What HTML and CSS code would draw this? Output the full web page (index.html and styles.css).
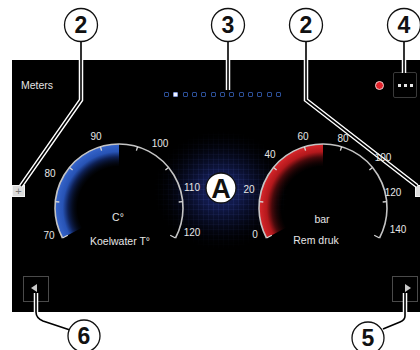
FILE: index.html
```html
<!DOCTYPE html>
<html lang="nl">
<head>
    <meta charset="UTF-8">
    <meta name="viewport" content="width=device-width, initial-scale=1.0">
    <title>Meters</title>
    <link rel="stylesheet" href="styles.css">
</head>
<body>
<div class="page">
    <div class="screen">
        <div class="topbar">
            <span class="title">Meters</span>
            <div class="pager">
                <i></i><i class="active"></i><i></i><i></i><i></i><i></i><i></i><i></i><i></i><i></i><i></i><i></i><i></i>
            </div>
            <span class="rec"></span>
            <button class="more"><i></i><i></i><i></i></button>
        </div>

        <div class="gauges">
            <span class="side-btn">+</span>

            <!-- coolant temperature -->
            <svg class="gauge" width="170" height="130" viewBox="0 0 170 130">
                <defs>
                    <radialGradient id="blueBand" gradientUnits="userSpaceOnUse" cx="85" cy="80" r="64">
                        <stop offset="0.62" stop-color="#000" stop-opacity="0"/>
                        <stop offset="0.8" stop-color="#0f2258"/>
                        <stop offset="0.88" stop-color="#2753b5"/>
                        <stop offset="1" stop-color="#3766cc"/>
                    </radialGradient>
                </defs>
                <path d="M28.5 110 A64 64 0 0 1 85 16 L85 38 A42 42 0 0 0 47.9 99.7 Z" fill="url(#blueBand)"/>
                <path class="rim" d="M28.5 110 A64 64 0 1 1 141.5 110"/>
                <path class="ticks" d="M28.5 110 L33.8 107.2 M21.3 73.6 L25.3 74 M35.5 39.4 L38.6 41.9 M66.4 18.8 L67.6 22.6 M103.6 18.8 L102.4 22.6 M134.5 39.4 L131.4 41.9 M148.7 73.6 L144.7 74 M141.5 110 L136.2 107.2"/>
                <text class="num" x="15" y="107">70</text>
                <text class="num" x="16" y="45">80</text>
                <text class="num" x="62" y="8">90</text>
                <text class="num" x="126" y="15">100</text>
                <text class="num" x="158" y="59">110</text>
                <text class="num" x="158" y="104">120</text>
                <text class="unit" x="84" y="89">C°</text>
                <text class="unit" x="86" y="113">Koelwater T°</text>
            </svg>

            <div class="glow"></div>

            <!-- brake pressure -->
            <svg class="gauge" width="170" height="130" viewBox="0 0 170 130">
                <defs>
                    <radialGradient id="redBand" gradientUnits="userSpaceOnUse" cx="85" cy="80" r="64">
                        <stop offset="0.62" stop-color="#000" stop-opacity="0"/>
                        <stop offset="0.8" stop-color="#4a0a0c"/>
                        <stop offset="0.88" stop-color="#b3181c"/>
                        <stop offset="1" stop-color="#d9272b"/>
                    </radialGradient>
                </defs>
                <path d="M28.5 110 A64 64 0 0 1 85 16 L85 38 A42 42 0 0 0 47.9 99.7 Z" fill="url(#redBand)"/>
                <path class="rim" d="M28.5 110 A64 64 0 1 1 141.5 110"/>
                <path class="ticks" d="M28.5 110 L33.8 107.2 M21.3 73.6 L25.3 74 M35.5 39.4 L38.6 41.9 M66.4 18.8 L67.6 22.6 M103.6 18.8 L102.4 22.6 M134.5 39.4 L131.4 41.9 M148.7 73.6 L144.7 74 M141.5 110 L136.2 107.2"/>
                <text class="num" x="17" y="106">0</text>
                <text class="num" x="11" y="61">20</text>
                <text class="num" x="32" y="26">40</text>
                <text class="num" x="65" y="8">60</text>
                <text class="num" x="105" y="10">80</text>
                <text class="num" x="145" y="29">100</text>
                <text class="num" x="155" y="64">120</text>
                <text class="num" x="160" y="101">140</text>
                <text class="unit" x="84" y="91">bar</text>
                <text class="unit" x="78" y="112">Rem druk</text>
            </svg>

            <span class="side-btn side-right"></span>
        </div>

        <div class="nav">
            <button class="nav-btn prev"></button>
            <button class="nav-btn next"></button>
        </div>
    </div>

    <!-- manual callouts -->
    <svg class="callouts" width="420" height="350" viewBox="0 0 420 350">
        <g class="halo">
            <path d="M81 42 V100 L21 186"/>
            <path d="M228 42 V90"/>
            <path d="M306 42 V100 L417 186"/>
            <path d="M404 42 V73"/>
            <path d="M36 293 V312 Q36 318 43 321 L70 330"/>
            <path d="M405 293 V316 Q405 320 400 322 L383 329"/>
        </g>
        <g class="leader">
            <path d="M81 42 V100 L21 186"/>
            <path d="M228 42 V90"/>
            <path d="M306 42 V100 L417 186"/>
            <path d="M404 42 V73"/>
            <path d="M36 292 V312 Q36 318 43 321 L70 330"/>
            <path d="M405 292 V316 Q405 320 400 322 L383 329"/>
        </g>
        <g class="bubble">
            <circle cx="81" cy="25" r="16.5"/><text x="81" y="33">2</text>
            <circle cx="228" cy="25" r="16.5"/><text x="228" y="33">3</text>
            <circle cx="306" cy="25" r="16.5"/><text x="306" y="33">2</text>
            <circle cx="404" cy="25" r="16.5"/><text x="404" y="33">4</text>
            <circle cx="84" cy="336" r="16"/><text x="84" y="344">6</text>
            <circle cx="368" cy="338" r="16"/><text x="368" y="346">5</text>
        </g>
        <g class="bubble bubble-a">
            <circle cx="221" cy="188" r="15"/><text x="221" y="198">A</text>
        </g>
    </svg>
</div>
</body>
</html>
```

FILE: styles.css
```css
body {
    margin: 0;
    background: #fff;
    font-family: "Liberation Sans", Arial, sans-serif;
}
.page {
    position: relative;
    width: 420px;
    height: 350px;
    overflow: hidden;
    padding-top: 60px;
    box-sizing: border-box;
}
.screen {
    margin-left: 12px;
    width: 408px;
    height: 252px;
    background: #000;
    overflow: hidden;
    display: flex;
    flex-direction: column;
}

/* top bar */
.topbar {
    height: 38px;
    box-sizing: border-box;
    padding: 12px 3px 0 9px;
    display: grid;
    grid-template-columns: 143px 1fr auto auto;
    align-items: center;
}
.title {
    color: #e4e4e4;
    font-size: 10.5px;
}
.pager {
    align-self: end;
    margin-bottom: 1px;
    display: flex;
    gap: 4.33px;
}
.pager i {
    width: 5px;
    height: 5px;
    box-sizing: border-box;
    border: 1px solid #2c4f96;
    border-radius: 1px;
}
.pager i.active {
    background: #f2f4ff;
    border-color: #7d95d6;
}
.rec {
    width: 9px;
    height: 9px;
    box-sizing: border-box;
    border-radius: 50%;
    background: #e3222a;
    border: 1.5px solid #f0cfd0;
    margin-right: 9px;
}
.more {
    width: 24px;
    height: 26px;
    padding: 0;
    background: #000;
    border: 1.5px solid #3a3a3a;
    border-radius: 2px;
    display: flex;
    align-items: center;
    justify-content: center;
    gap: 3px;
}
.more i {
    width: 3px;
    height: 3px;
    background: #e6e6e6;
}

/* gauges */
.gauges {
    display: flex;
    align-items: flex-start;
    padding-top: 30px;
}
.side-btn {
    flex: none;
    width: 13px;
    height: 12px;
    margin-top: 57px;
    box-sizing: border-box;
    background: #dcdcdc;
    border: 1px solid #f4f4f4;
    color: #7a7a7a;
    font-size: 11px;
    line-height: 10px;
    text-align: center;
}
.side-right {
    margin-left: 7px;
}
.gauge {
    flex: none;
    position: relative;
    z-index: 1;
    overflow: visible;
}
.gauges .side-btn + .gauge {
    margin-left: 9px;
}
.glow {
    flex: none;
    width: 136px;
    height: 120px;
    margin: 2px -51px 0;
    background:
        repeating-linear-gradient(0deg, rgba(80, 100, 200, 0.12) 0 1px, transparent 1px 5px),
        repeating-linear-gradient(90deg, rgba(80, 100, 200, 0.12) 0 1px, transparent 1px 5px),
        radial-gradient(closest-side, #172262, #0a1030 60%, #000);
    -webkit-mask-image: radial-gradient(closest-side, #000 30%, transparent);
    mask-image: radial-gradient(closest-side, #000 30%, transparent);
}
.rim {
    fill: none;
    stroke: #c4c4c4;
    stroke-width: 1.6;
}
.ticks {
    fill: none;
    stroke: #d6d6d6;
    stroke-width: 1.3;
}
.num,
.unit {
    fill: #e6e6e6;
    font-family: "Liberation Sans", Arial, sans-serif;
    font-size: 10px;
    text-anchor: middle;
    dominant-baseline: central;
}
.unit {
    font-size: 10.5px;
}

/* bottom navigation */
.nav {
    margin-top: auto;
    padding: 0 2px 10px 11px;
    display: flex;
    justify-content: space-between;
}
.nav-btn {
    width: 26px;
    height: 26px;
    padding: 0;
    background: #000;
    border: 1px solid #4a4a4a;
    display: flex;
    align-items: center;
    justify-content: center;
}
.nav-btn::before {
    content: "";
    border-top: 4.5px solid transparent;
    border-bottom: 4.5px solid transparent;
}
.prev::before {
    border-right: 6px solid #c9c9c9;
    margin-left: -5px;
    margin-top: -2px;
}
.next::before {
    border-left: 6px solid #c9c9c9;
    margin-left: 5px;
    margin-top: -2px;
}

/* callouts drawn over the screenshot */
.callouts {
    position: absolute;
    top: 0;
    left: 0;
    pointer-events: none;
}
.halo path {
    fill: none;
    stroke: #fff;
    stroke-width: 4.5;
}
.leader path {
    fill: none;
    stroke: #000;
    stroke-width: 1.6;
}
.bubble circle {
    fill: #fff;
    stroke: #111;
    stroke-width: 1.3;
}
.bubble text {
    fill: #111;
    font-family: "Liberation Sans", Arial, sans-serif;
    font-weight: bold;
    font-size: 23px;
    text-anchor: middle;
}
.bubble-a text {
    font-size: 27px;
}
```
